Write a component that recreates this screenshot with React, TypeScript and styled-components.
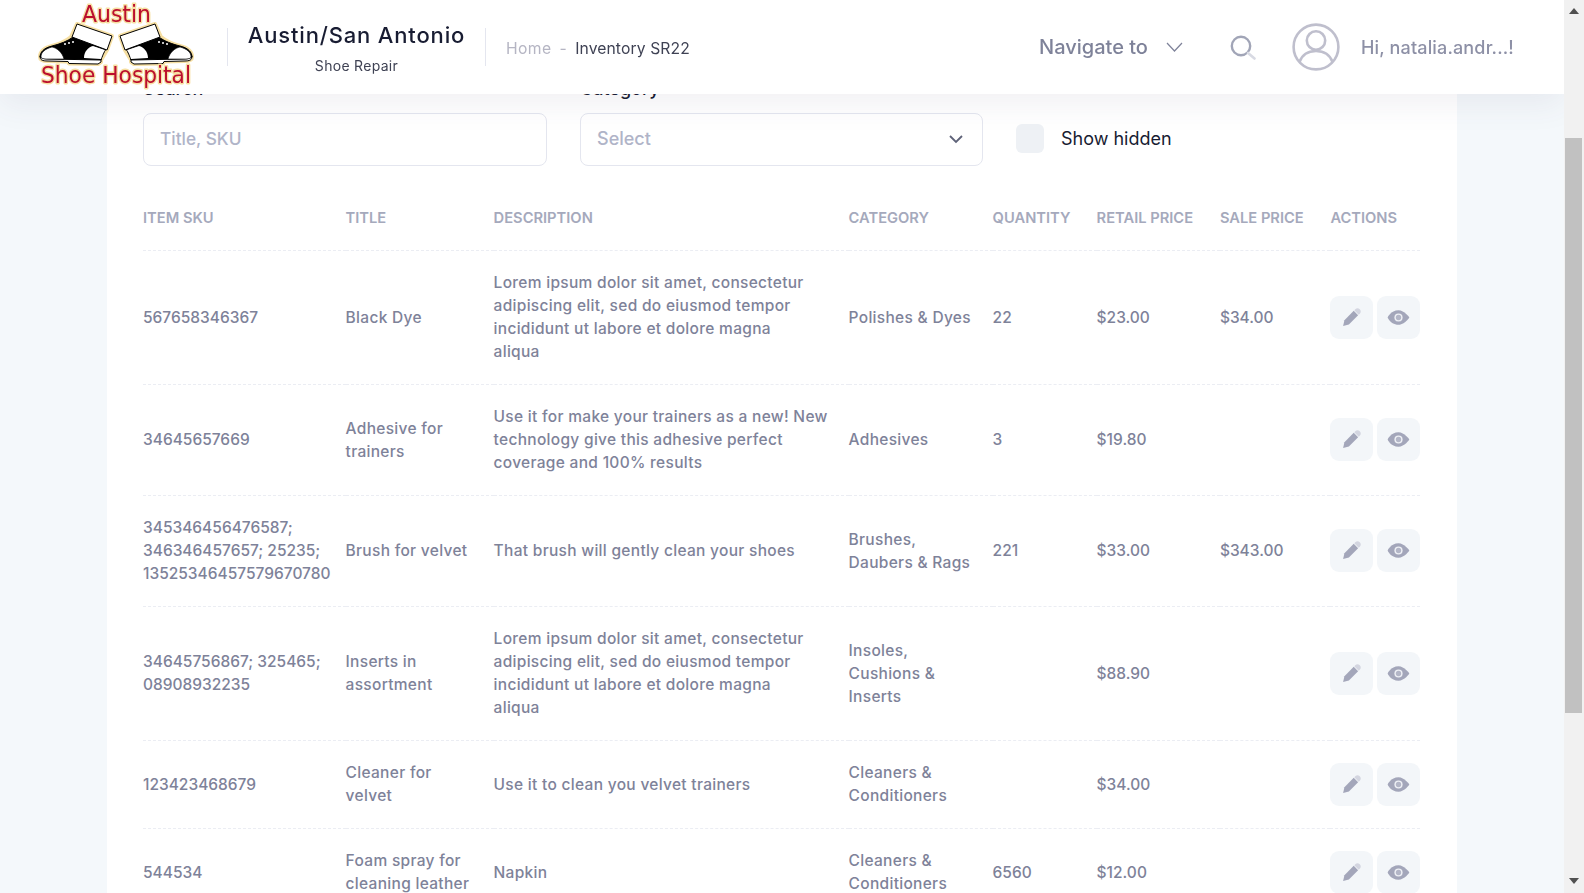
import React, { useLayoutEffect, useRef } from "react";
import styled, { createGlobalStyle } from "styled-components";

const FONT = `Inter, "Noto Sans", "Liberation Sans", sans-serif`;

const Global = createGlobalStyle`
  html, body { margin: 0; padding: 0; height: 100%; overflow: hidden; }
  body { font-family: ${FONT}; background: #f4f8fb; }
  * { box-sizing: border-box; }
`;

const Shell = styled.div`
  display: flex;
  width: 1584px;
  height: 893px;
`;

const Scroller = styled.div`
  flex: 1;
  min-width: 0;
  height: 893px;
  overflow-y: scroll;
  overflow-x: hidden;
  scrollbar-width: none;
  background: #f4f8fb;
`;

const Rail = styled.div`
  flex: none;
  width: 20px;
  height: 893px;
  background: #f1f1f1;
  display: flex;
  flex-direction: column;
`;

const RailButton = styled.div<{ $down?: boolean }>`
  height: 17px;
  flex: none;
  display: flex;
  justify-content: center;
  align-items: ${(p) => (p.$down ? "flex-start" : "flex-end")};
  padding: ${(p) => (p.$down ? "2px 1px 0 0" : "0 1px 3px 0")};
`;

const RailArrow = styled.span<{ $down?: boolean }>`
  display: block;
  width: 0;
  height: 0;
  border-left: 5px solid transparent;
  border-right: 5px solid transparent;
  ${(p) => (p.$down ? "border-top: 6px solid #505050;" : "border-bottom: 6px solid #505050;")}
`;

const RailTrack = styled.div`
  flex: 1;
`;

const RailThumb = styled.div`
  height: 575px;
  margin: 121px 2px 0 1px;
  background: #c1c1c1;
`;

const Header = styled.header`
  position: sticky;
  top: 0;
  z-index: 10;
  height: 94px;
  background: #fff;
  display: flex;
  align-items: center;
  padding: 0 50px 0 38px;
  box-shadow: 0 10px 30px 0 rgba(82, 63, 105, 0.08);
`;

const LogoSvg = styled.svg`
  width: 156px;
  height: 90px;
  flex: none;
  align-self: flex-start;
  margin-right: 33px;
`;

const Brand = styled.div`
  width: 259px;
  height: 38px;
  border-left: 1px solid #e4e6ef;
  border-right: 1px solid #e4e6ef;
  display: flex;
  flex-direction: column;
  align-items: center;
  flex: none;
`;

const BrandName = styled.div`
  font-size: 22px;
  font-weight: 500;
  color: #181c32;
  line-height: 28px;
  margin-top: -7px;
  letter-spacing: 0.83px;
  white-space: nowrap;
`;

const BrandSub = styled.div`
  font-size: 14px;
  color: #3f4254;
  line-height: 18px;
  margin-top: 8px;
  letter-spacing: 0.3px;
`;

const Crumbs = styled.nav`
  display: flex;
  align-items: center;
  gap: 8px;
  margin: 2px 0 0 20px;
  font-size: 15.7px;
  letter-spacing: 0.4px;
  color: #b5b5c3;
`;

const CrumbActive = styled.span`
  color: #3f4254;
  letter-spacing: 0.1px;
`;

const HeadRight = styled.div`
  margin-left: auto;
  display: flex;
  align-items: center;
`;

const NavTo = styled.div`
  display: flex;
  align-items: center;
  gap: 18px;
  font-size: 20px;
  font-weight: 500;
  color: #7e8299;
  margin-right: 46px;
`;

const SearchSvg = styled.svg`
  width: 27px;
  height: 27px;
  display: block;
  margin-right: 36px;
`;

const AvatarSvg = styled.svg`
  width: 48px;
  height: 48px;
  display: block;
  margin-right: 21px;
`;

const Greeting = styled.div`
  font-size: 18px;
  font-weight: 500;
  color: #8d90a6;
  letter-spacing: 0.15px;
  white-space: nowrap;
`;

const Page = styled.main`
  padding: 30px 0 0 107px;
`;

const Card = styled.section`
  background: #fff;
  height: 1210px;
  padding: 36px 36px 0 36px;
  border-radius: 8px;
  width: 1350px;
`;

const CardTitle = styled.h2`
  margin: 0;
  height: 103px;
  font-size: 22px;
  font-weight: 600;
  color: #181c32;
`;

const Filters = styled.div`
  display: flex;
  align-items: flex-end;
  margin-bottom: 18px;
`;

const Field = styled.label<{ $width: number }>`
  display: flex;
  flex-direction: column;
  gap: 10px;
  width: ${(p) => p.$width}px;
  margin-right: 33px;
  font-size: 18px;
  font-weight: 500;
  line-height: 28px;
  color: #181c32;
`;

const TextInput = styled.input`
  height: 53px;
  width: 100%;
  border: 1px solid #e4e6ef;
  border-radius: 8px;
  padding: 0 16px 2px;
  font: 500 17.3px ${FONT};
  outline: none;
  background: #fff;
  &::placeholder { color: #b0b4c8; }
`;

const SelectBox = styled.div`
  height: 53px;
  width: 100%;
  border: 1px solid #e4e6ef;
  border-radius: 8px;
  padding: 0 18px 2px 16px;
  display: flex;
  align-items: center;
  justify-content: space-between;
  font-size: 18px;
  font-weight: 500;
  color: #b0b4c8;
`;

const CheckField = styled.div`
  display: flex;
  align-items: center;
  gap: 17px;
  height: 53px;
  padding-bottom: 3px;
  font-size: 18px;
  font-weight: 400;
  color: #181c32;
`;

const CheckBox = styled.span`
  width: 28px;
  height: 29px;
  border-radius: 6px;
  background: #eef1f5;
  display: block;
`;

const Table = styled.table`
  width: 1277px;
  border-collapse: collapse;
  table-layout: fixed;
`;

const Th = styled.th`
  height: 66px;
  padding: 3px 0 0;
  text-align: left;
  font-size: 14.7px;
  font-weight: 600;
  color: #a5a9bc;
  text-transform: uppercase;
  white-space: nowrap;
  border-bottom: 1px dashed #ebedf3;
`;

const Td = styled.td<{ $numeric?: boolean }>`
  padding: 20.5px 0;
  font-size: 15.5px;
  font-weight: 450;
  line-height: 23px;
  letter-spacing: ${(p) => (p.$numeric ? "0" : "0.3px")};
  color: #7e8299;
  white-space: pre;
  border-bottom: 1px dashed #ebedf3;
  vertical-align: middle;
`;

const Actions = styled.div`
  display: flex;
  gap: 4px;
`;

const IconButton = styled.button`
  width: 43px;
  height: 43px;
  border: 0;
  padding: 0;
  border-radius: 9px;
  background: #f3f6f9;
  display: flex;
  align-items: center;
  justify-content: center;
`;

const Shoe = () => (
  <g stroke="#000" strokeWidth="1" strokeLinejoin="round">
    <path d="M2 56C2 60 4 61 10 61L30 61.5L31 63.5L60 64L63 62L63 58L2 56Z" fill="#fff" />
    <path d="M2 57C2 52 6 48 14 46C22 44 30 41 35 37L68 49C66 52 64 57 63 60L10 59C6 59 3 58 2 57Z" fill="#000" />
    <path d="M3 57C3 52 7 49 14 47C19 48 24 52 26 59L8 59C5 59 3 58 3 57Z" fill="#fff" strokeWidth=".6" />
    <path d="M46 58C46 52 50 47 55 46L67 50C65 53 64 56 63 59Z" fill="#fff" stroke="none" />
    <path d="M39 24L74 36L69 50L34 37Z" fill="#fff" />
    <circle cx="27" cy="44" r="1" fill="#fff" stroke="none" />
    <circle cx="31" cy="43" r="1" fill="#fff" stroke="none" />
    <circle cx="35" cy="42" r="1" fill="#fff" stroke="none" />
  </g>
);

const ShoeHalo = () => (
  <path
    d="M2 57C2 52 6 48 14 46C22 44 28 41 33 37L39 24L74 36L69 50L63 60L63 62L60 64L31 63.5L30 61.5L10 61C4 61 2 60 2 57Z"
    fill="#f6dfa2"
    stroke="#f6dfa2"
    strokeWidth="4"
    strokeLinejoin="round"
  />
);

const Logo = () => (
  <LogoSvg viewBox="0 0 156 90">
    <ShoeHalo />
    <Shoe />
    <g transform="translate(156 0) scale(-1 1)">
      <ShoeHalo />
      <Shoe />
    </g>
    <g fontFamily="'DejaVu Sans', sans-serif" fill="#bb0f2e" stroke="#f6dfa2" strokeWidth="2.8" paintOrder="stroke" strokeLinejoin="round">
      <text x="44" y="22" fontSize="23" textLength="69" lengthAdjust="spacingAndGlyphs">Austin</text>
      <text x="3" y="83" fontSize="23" textLength="150" lengthAdjust="spacingAndGlyphs">Shoe Hospital</text>
    </g>
  </LogoSvg>
);

const Chevron = () => (
  <svg width="17" height="12" viewBox="0 0 17 12" fill="none" stroke="#7e8299" strokeWidth="1.2">
    <path d="M1 2L8.5 10L16 2" />
  </svg>
);

const SelectChevron = () => (
  <svg width="16" height="10" viewBox="0 0 16 10" fill="none" stroke="#5e6278" strokeWidth="1.8">
    <path d="M2 2L8 8L14 2" />
  </svg>
);

const SearchIcon = () => (
  <SearchSvg viewBox="0 0 27 27" fill="none">
    <circle cx="12" cy="12" r="9.2" stroke="#a1a5b7" strokeWidth="2.4" />
    <path d="M19 19L25.5 24.5" stroke="#d8dae3" strokeWidth="2.6" strokeLinecap="round" />
  </SearchSvg>
);

const AvatarIcon = () => (
  <AvatarSvg viewBox="0 0 48 48" fill="none" stroke="#bfbfcd" strokeWidth="2.6">
    <circle cx="24" cy="24" r="22.4" />
    <circle cx="24" cy="17.5" r="9.2" />
    <path d="M7.5 39C10 32 16 28 24 28C32 28 38 32 40.5 39" />
  </AvatarSvg>
);

const PencilIcon = () => (
  <svg width="25" height="25" viewBox="0 0 24 24">
    <g transform="rotate(45 12 12)">
      <path d="M9 5.2V3.5C9 2 10.2 .8 12 .8S15 2 15 3.5V5.2Z" fill="#d3d5e0" />
      <path d="M9 6H15V18.6L12 23.4L9 18.6Z" fill="#a3a6ba" />
    </g>
  </svg>
);

const EyeIcon = () => (
  <svg width="29" height="29" viewBox="0 0 24 24">
    <path d="M3 12C3 12 5.45 6 12 6C16.9 6 21 12 21 12C21 12 16.9 18 12 18C5.45 18 3 12 3 12Z" fill="#a3a6ba" />
    <circle cx="12" cy="12" r="3.4" fill="#eef0f5" />
    <circle cx="12" cy="12" r="2.2" fill="#b3b6c7" />
  </svg>
);

const COLS = [202.6, 148, 355, 144, 104, 123.3, 110.5, 89.6];
const HEADS = ["Item SKU", "Title", "Description", "Category", "Quantity", "Retail price", "Sale price", "Actions"];
const NUMERIC_COLS = [0, 4, 5, 6];

const LOREM = "Lorem ipsum dolor sit amet, consectetur\nadipiscing elit, sed do eiusmod tempor\nincididunt ut labore et dolore magna\naliqua";

const ROWS = [
  ["567658346367", "Black Dye", LOREM, "Polishes & Dyes", "22", "$23.00", "$34.00"],
  ["34645657669", "Adhesive for\ntrainers", "Use it for make your trainers as a new! New\ntechnology give this adhesive perfect\ncoverage and 100% results", "Adhesives", "3", "$19.80", ""],
  ["345346456476587;\n346346457657; 25235;\n13525346457579670780", "Brush for velvet", "That brush will gently clean your shoes", "Brushes,\nDaubers & Rags", "221", "$33.00", "$343.00"],
  ["34645756867; 325465;\n08908932235", "Inserts in\nassortment", LOREM, "Insoles,\nCushions &\nInserts", "", "$88.90", ""],
  ["123423468679", "Cleaner for\nvelvet", "Use it to clean you velvet trainers", "Cleaners &\nConditioners", "", "$34.00", ""],
  ["544534", "Foam spray for\ncleaning leather", "Napkin", "Cleaners &\nConditioners", "6560", "$12.00", ""],
];

export default function App() {
  const ref = useRef<HTMLDivElement>(null);
  useLayoutEffect(() => {
    if (ref.current) ref.current.scrollTop = 188;
  }, []);
  return (
    <Shell>
      <Global />
      <Scroller ref={ref}>
        <Header>
          <Logo />
          <Brand>
            <BrandName>Austin/San Antonio</BrandName>
            <BrandSub>Shoe Repair</BrandSub>
          </Brand>
          <Crumbs>
            <span>Home</span>
            <span>-</span>
            <CrumbActive>Inventory SR22</CrumbActive>
          </Crumbs>
          <HeadRight>
            <NavTo>
              Navigate to
              <Chevron />
            </NavTo>
            <SearchIcon />
            <AvatarIcon />
            <Greeting>Hi, natalia.andr...!</Greeting>
          </HeadRight>
        </Header>
        <Page>
          <Card>
            <CardTitle>Inventory SR22</CardTitle>
            <Filters>
              <Field $width={404}>
                Search
                <TextInput placeholder="Title, SKU" />
              </Field>
              <Field $width={403}>
                Category
                <SelectBox>
                  Select
                  <SelectChevron />
                </SelectBox>
              </Field>
              <CheckField>
                <CheckBox />
                Show hidden
              </CheckField>
            </Filters>
            <Table>
              <colgroup>
                {COLS.map((w, i) => (
                  <col key={i} style={{ width: w }} />
                ))}
              </colgroup>
              <thead>
                <tr>
                  {HEADS.map((h) => (
                    <Th key={h}>{h}</Th>
                  ))}
                </tr>
              </thead>
              <tbody>
                {ROWS.map((r) => (
                  <tr key={r[0]}>
                    {r.map((c, i) => (
                      <Td key={i} $numeric={NUMERIC_COLS.includes(i)}>
                        {c}
                      </Td>
                    ))}
                    <Td>
                      <Actions>
                        <IconButton aria-label="Edit">
                          <PencilIcon />
                        </IconButton>
                        <IconButton aria-label="View">
                          <EyeIcon />
                        </IconButton>
                      </Actions>
                    </Td>
                  </tr>
                ))}
              </tbody>
            </Table>
          </Card>
        </Page>
      </Scroller>
      <Rail>
        <RailButton>
          <RailArrow />
        </RailButton>
        <RailTrack>
          <RailThumb />
        </RailTrack>
        <RailButton $down>
          <RailArrow $down />
        </RailButton>
      </Rail>
    </Shell>
  );
}
